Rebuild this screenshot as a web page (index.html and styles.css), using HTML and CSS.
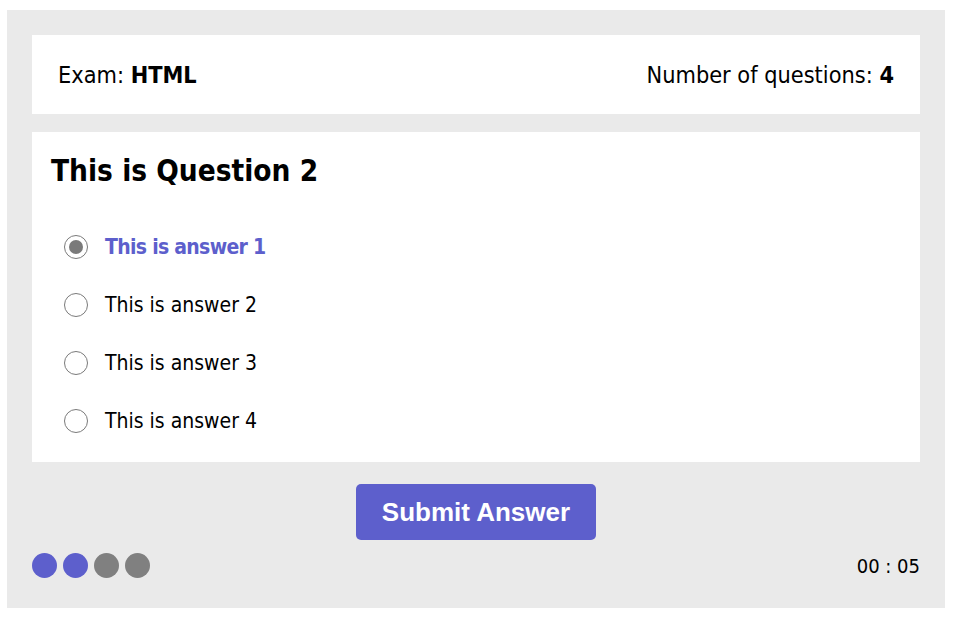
FILE: index.html
```html
<!DOCTYPE html>
<html>
<head>
<meta charset="utf-8">
<link rel="stylesheet" href="styles.css">
</head>
<body>
<div class="quiz">
  <div class="header">
    <div class="exam">Exam: <b>HTML</b></div>
    <div class="count">Number of questions: <b>4</b></div>
  </div>
  <div class="card">
    <h1 class="title">This is Question 2</h1>
    <ul class="answers">
      <li class="answer selected"><span class="radio"></span><span class="label">This is answer 1</span></li>
      <li class="answer"><span class="radio"></span><span class="label">This is answer 2</span></li>
      <li class="answer"><span class="radio"></span><span class="label">This is answer 3</span></li>
      <li class="answer"><span class="radio"></span><span class="label">This is answer 4</span></li>
    </ul>
  </div>
  <div class="actions">
    <button class="submit">Submit Answer</button>
  </div>
  <div class="footer">
    <div class="dots">
      <span class="dot done"></span>
      <span class="dot done"></span>
      <span class="dot"></span>
      <span class="dot"></span>
    </div>
    <div class="timer">00 : 05</div>
  </div>
</div>
</body>
</html>
```
FILE: styles.css
```css
html, body {
  margin: 0;
  padding: 0;
  background: #ffffff;
}
body {
  padding: 10px 10px 10px 7px;
  font-family: "DejaVu Sans Condensed", "DejaVu Sans", sans-serif;
  color: #000;
}
.quiz {
  width: 938px;
  height: 598px;
  box-sizing: border-box;
  background: #eaeaea;
  padding: 25px 25px 0 25px;
}
.header {
  background: #fff;
  height: 79px;
  display: flex;
  align-items: center;
  justify-content: space-between;
  padding: 0 26px;
  font-size: 23.3px;
}
.card {
  margin-top: 18px;
  background: #fff;
  height: 330px;
  box-sizing: border-box;
  padding: 21px 19px 0 19px;
}
.title {
  margin: 0;
  font-size: 29.5px;
  font-weight: bold;
  line-height: 36px;
}
.answers {
  list-style: none;
  margin: 46px 0 0 0;
  padding: 0 0 0 13px;
}
.answer {
  display: flex;
  align-items: center;
  height: 24px;
  margin-bottom: 34px;
  font-size: 21px;
}
.radio {
  width: 24px;
  height: 24px;
  box-sizing: border-box;
  border: 1.5px solid #7a7a7a;
  border-radius: 50%;
  margin-right: 17px;
  display: flex;
  align-items: center;
  justify-content: center;
  flex: none;
}
.selected .radio::after {
  content: "";
  width: 14px;
  height: 14px;
  border-radius: 50%;
  background: #7a7a7a;
}
.selected .label {
  color: #5d5fcc;
  font-weight: bold;
  letter-spacing: -0.7px;
}
.actions {
  display: flex;
  justify-content: center;
  margin-top: 22px;
}
.submit {
  width: 240px;
  height: 56px;
  border: none;
  border-radius: 5px;
  background: #5d5fcc;
  color: #fff;
  font-family: "Liberation Sans", Arial, sans-serif;
  font-weight: bold;
  font-size: 26px;
  padding: 0;
}
.footer {
  margin-top: 13px;
  display: flex;
  align-items: center;
  justify-content: space-between;
}
.dots {
  display: flex;
  gap: 6px;
}
.dot {
  width: 25px;
  height: 25px;
  border-radius: 50%;
  background: #808080;
}
.dot.done {
  background: #5d5fcc;
}
.timer {
  font-size: 20px;
}
```
